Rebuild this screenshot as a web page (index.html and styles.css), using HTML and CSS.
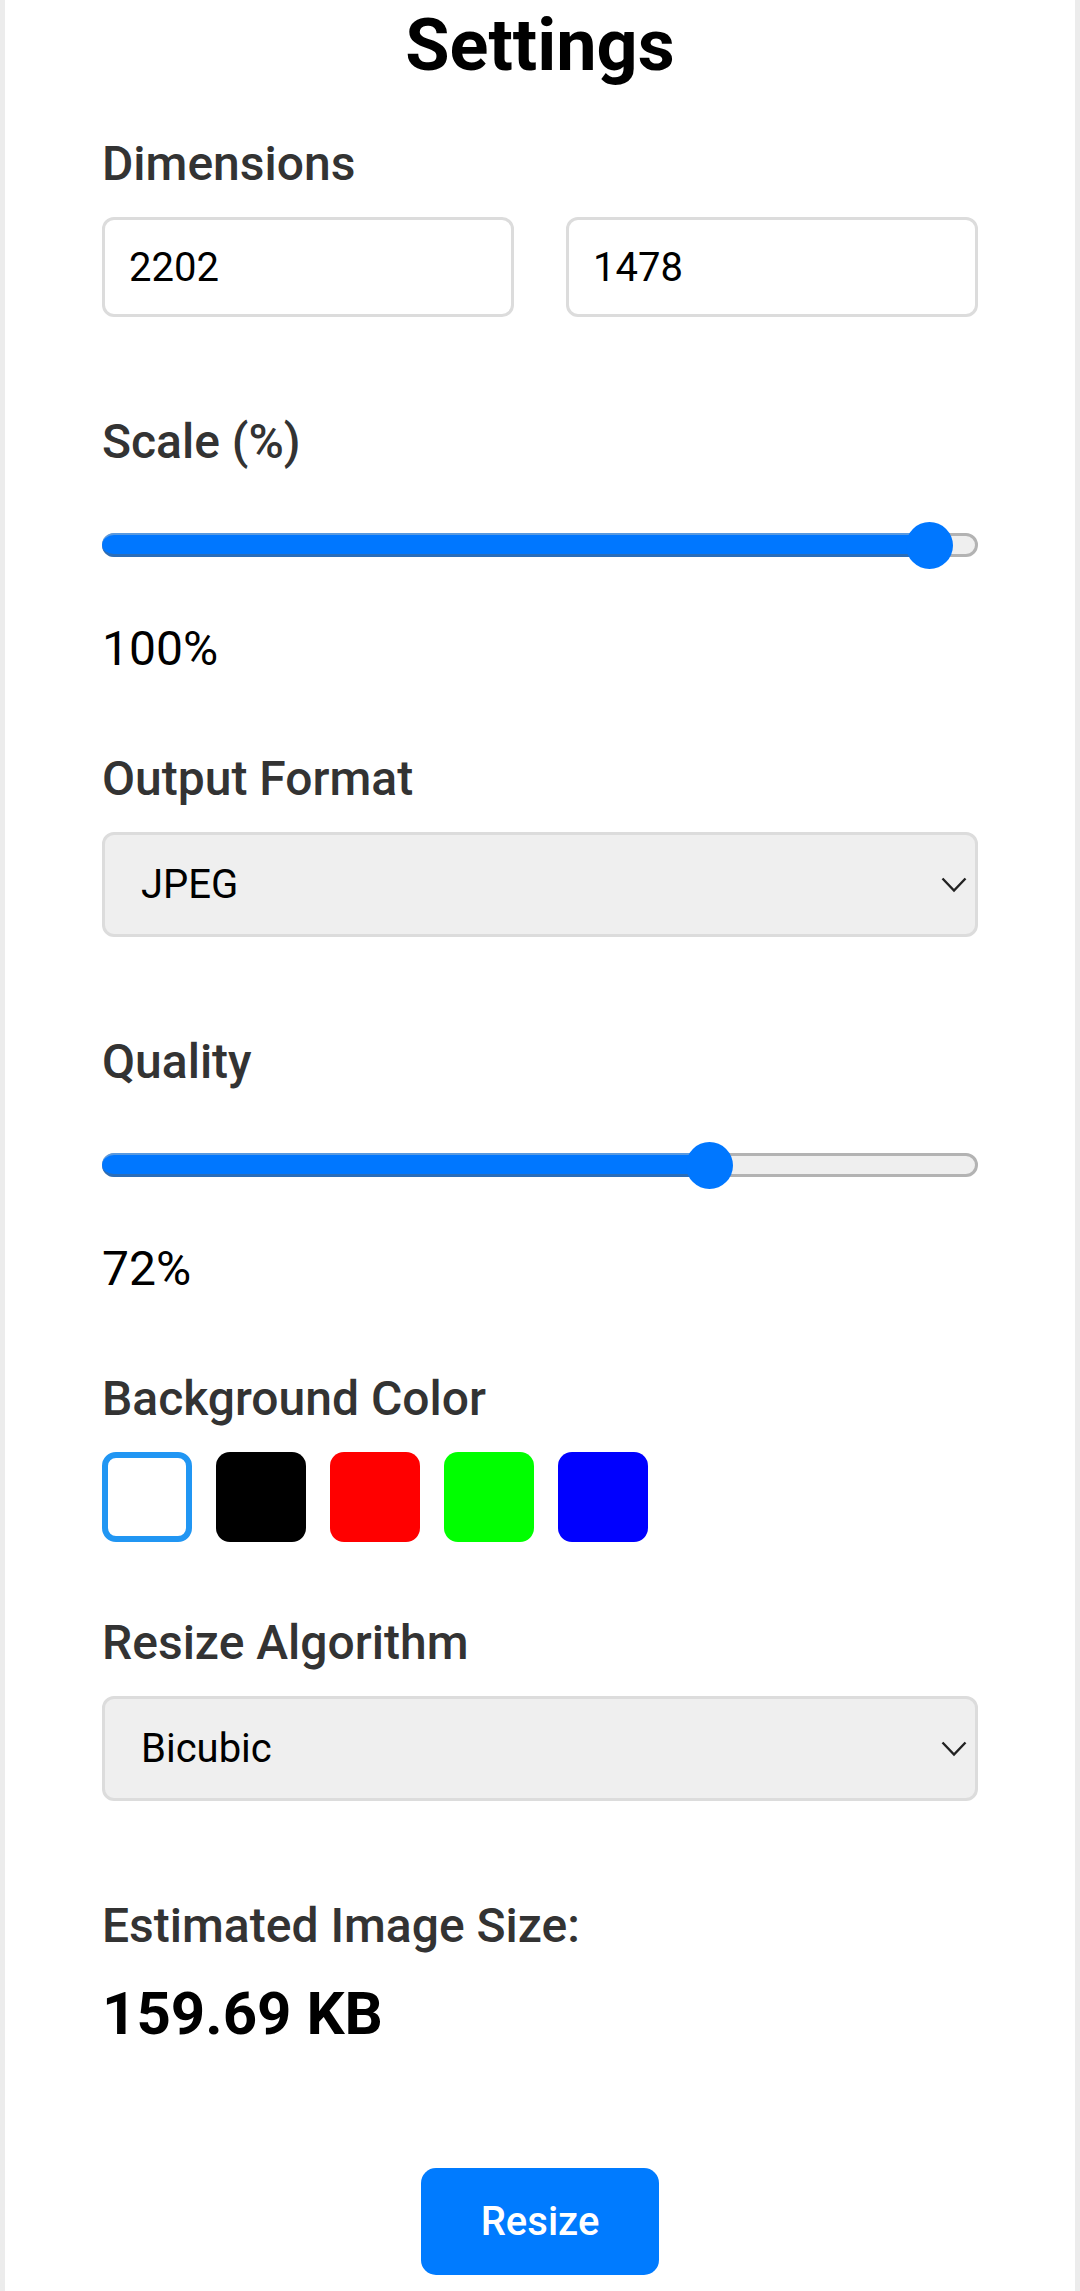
FILE: index.html
```html
<!DOCTYPE html>
<html lang="en">
<head>
<meta charset="utf-8">
<title>Settings</title>
<link rel="stylesheet" href="styles.css">
</head>
<body>
<main class="card">
  <h1 class="title">Settings</h1>

  <section class="group group-first">
    <label class="label">Dimensions</label>
    <div class="dims">
      <input class="field" type="text" value="2202">
      <input class="field" type="text" value="1478">
    </div>
  </section>

  <section class="group">
    <label class="label">Scale (%)</label>
    <div class="range" style="--pos: 94.4%">
      <div class="track"></div>
      <div class="fill"></div>
      <div class="thumb"></div>
    </div>
    <div class="value">100%</div>
  </section>

  <section class="group group-after-value">
    <label class="label">Output Format</label>
    <div class="select-wrap">
      <select class="select">
        <option>JPEG</option>
        <option>PNG</option>
        <option>WEBP</option>
      </select>
      <svg class="chevron" width="26" height="16" viewBox="0 0 26 16"><polyline points="1.5,1.5 13,13.5 24.5,1.5" fill="none" stroke="#222" stroke-width="2.4"/></svg>
    </div>
  </section>

  <section class="group">
    <label class="label">Quality</label>
    <div class="range" style="--pos: 69.3%">
      <div class="track"></div>
      <div class="fill"></div>
      <div class="thumb"></div>
    </div>
    <div class="value">72%</div>
  </section>

  <section class="group group-after-value">
    <label class="label">Background Color</label>
    <div class="swatches">
      <div class="swatch swatch-white selected"></div>
      <div class="swatch swatch-black"></div>
      <div class="swatch swatch-red"></div>
      <div class="swatch swatch-green"></div>
      <div class="swatch swatch-blue"></div>
    </div>
  </section>

  <section class="group group-after-swatch">
    <label class="label">Resize Algorithm</label>
    <div class="select-wrap">
      <select class="select">
        <option>Bicubic</option>
        <option>Bilinear</option>
        <option>Nearest</option>
      </select>
      <svg class="chevron" width="26" height="16" viewBox="0 0 26 16"><polyline points="1.5,1.5 13,13.5 24.5,1.5" fill="none" stroke="#222" stroke-width="2.4"/></svg>
    </div>
  </section>

  <section class="group">
    <label class="label">Estimated Image Size:</label>
    <div class="size">159.69 KB</div>
  </section>

  <div class="actions">
    <button class="btn" type="button">Resize</button>
  </div>
</main>
</body>
</html>
```

FILE: styles.css
```css
* { box-sizing: border-box; }

html, body {
  margin: 0;
  padding: 0;
}

body {
  background: #ececec;
  font-family: Roboto, "Liberation Sans", Arial, sans-serif;
  color: #000;
}

.card {
  margin: 0 5px;
  background: #fff;
  padding: 4px 97px 18px;
  min-height: 2291px;
}

.title {
  margin: 0;
  font-size: 72px;
  line-height: 84px;
  font-weight: 700;
  text-align: center;
  color: #000;
}

.group { margin-top: 97px; }
.group-first { margin-top: 48px; }
.group-after-value { margin-top: 74px; }
.group-after-swatch { margin-top: 73px; }

.label {
  display: block;
  font-size: 48px;
  line-height: 56px;
  font-weight: 500;
  color: #333;
  margin-bottom: 25px;
}

.dims {
  display: grid;
  grid-template-columns: 1fr 1fr;
  column-gap: 52px;
}

.field {
  height: 100px;
  width: 100%;
  border: 3px solid #dcdcdc;
  border-radius: 12px;
  padding: 0 24px;
  font-family: Roboto, "Liberation Sans", Arial, sans-serif;
  font-size: 40px;
  color: #000;
  background: #fff;
  outline: none;
}

.range {
  position: relative;
  height: 47px;
  margin-top: 52px;
}

.track {
  position: absolute;
  left: 0;
  right: 0;
  top: 11px;
  height: 24px;
  border-radius: 12px;
  background: #efefef;
  border: 3px solid #b3b3b3;
}

.fill {
  position: absolute;
  left: 0;
  top: 11px;
  height: 24px;
  width: var(--pos);
  border-radius: 12px 0 0 12px;
  background: #0077ff;
  border-top: 2px solid #5a9ae0;
  border-bottom: 3px solid #2b6db8;
}

.thumb {
  position: absolute;
  top: 0;
  left: var(--pos);
  width: 47px;
  height: 47px;
  margin-left: -23px;
  border-radius: 50%;
  background: #0077ff;
}

.value {
  margin-top: 52px;
  font-size: 48px;
  line-height: 56px;
  font-weight: 400;
  color: #000;
}

.select-wrap {
  position: relative;
}

.select {
  appearance: none;
  -webkit-appearance: none;
  display: block;
  width: 100%;
  height: 105px;
  border: 3px solid #dcdcdc;
  border-radius: 12px;
  background: #efefef;
  padding: 0 60px 0 36px;
  font-family: Roboto, "Liberation Sans", Arial, sans-serif;
  font-size: 40px;
  color: #000;
  outline: none;
}

.chevron {
  position: absolute;
  right: 11px;
  top: 50%;
  margin-top: -8px;
  pointer-events: none;
}

.swatches {
  display: flex;
  gap: 24px;
}

.swatch {
  width: 90px;
  height: 90px;
  border-radius: 14px;
}

.swatch-white { background: #fff; }
.swatch-black { background: #000; }
.swatch-red { background: #ff0000; }
.swatch-green { background: #00ff00; }
.swatch-blue { background: #0000ff; }

.selected { border: 6px solid #2196f3; }

.size {
  margin-top: 25px;
  font-size: 60px;
  line-height: 70px;
  font-weight: 700;
  color: #000;
}

.actions {
  display: flex;
  justify-content: center;
  margin-top: 119px;
}

.btn {
  height: 107px;
  width: 238px;
  border: none;
  border-radius: 15px;
  background: #007bff;
  color: #fff;
  font-family: Roboto, "Liberation Sans", Arial, sans-serif;
  font-size: 40px;
  font-weight: 500;
}
```
